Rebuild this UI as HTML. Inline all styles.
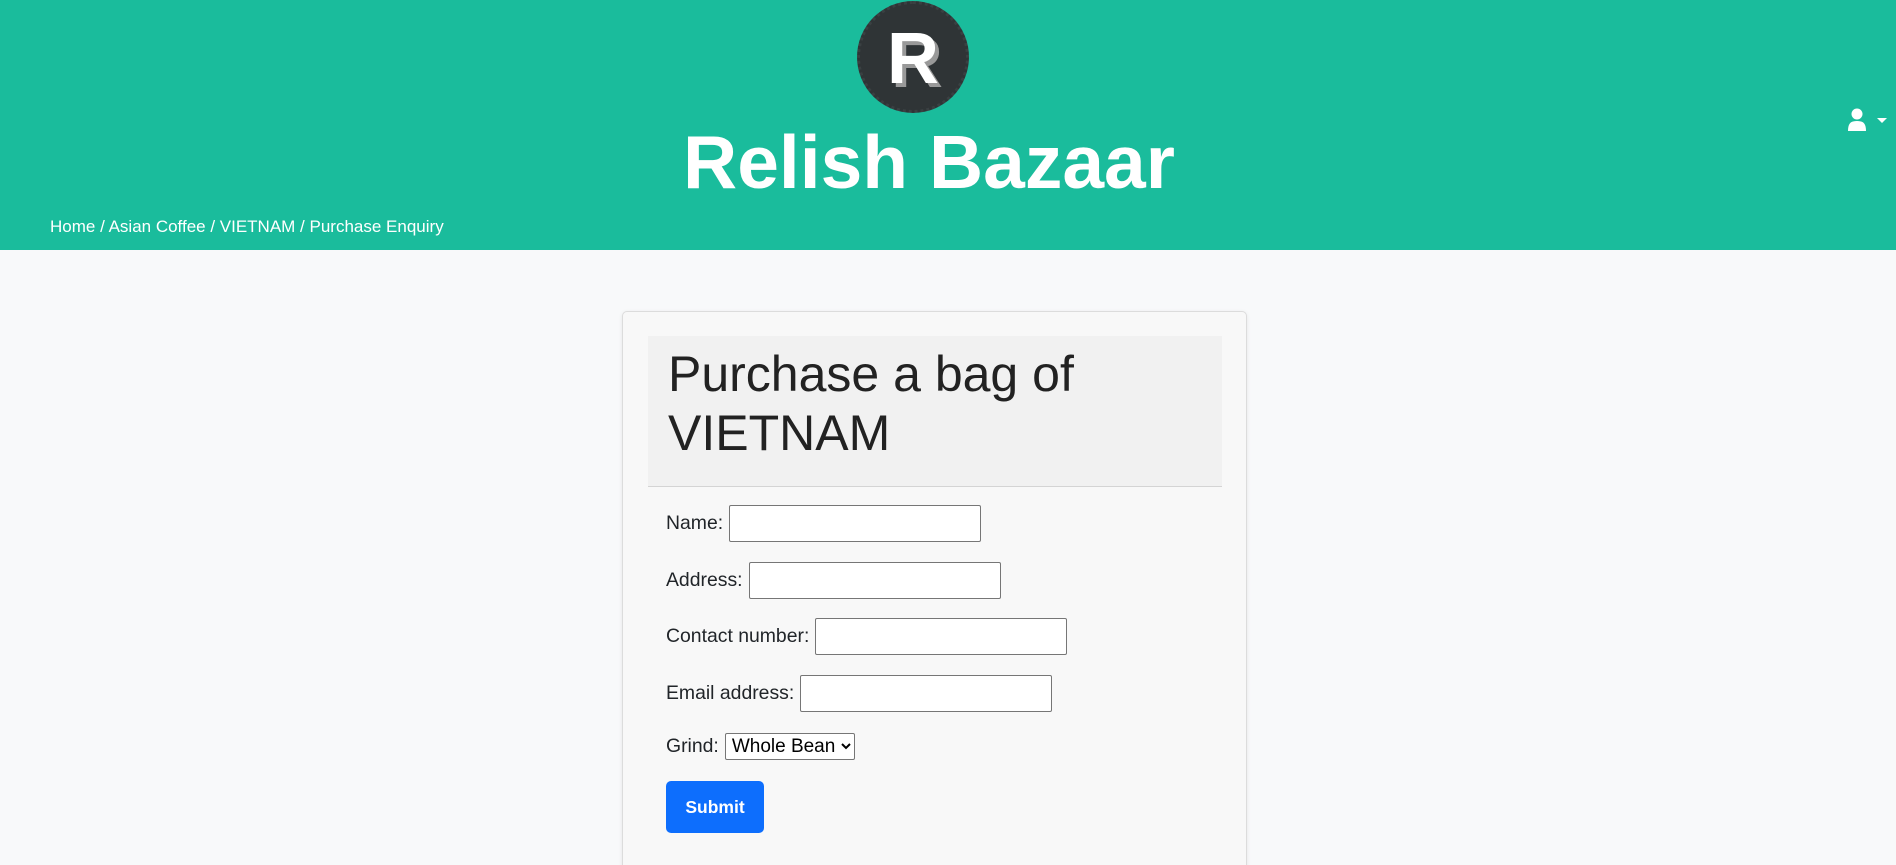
<!DOCTYPE html>
<html><head><meta charset="utf-8"><style>
*{box-sizing:border-box;margin:0;padding:0}
html,body{width:1896px;height:865px;overflow:hidden}
body{background:#f8f9fa;font-family:"Liberation Sans",Arial,sans-serif;color:#212529}
.wrap{position:relative;width:1896px;height:865px;overflow:hidden}
.hdr{position:absolute;left:0;top:0;width:1896px;height:250px;background:#1abc9c}
.logo{position:absolute;left:857px;top:1px;width:112px;height:112px;border-radius:50%;background:#2f3436;border:3px dotted #3a4042}
.logo span{position:absolute;left:0;right:0;top:14px;text-align:center;font-size:72px;font-weight:bold;color:#fff;text-shadow:4px 4px 0 #999}
.title{position:absolute;left:0;width:1858px;top:117px;text-align:center;font-size:75px;font-weight:bold;color:#fff;line-height:90px}
.bc{position:absolute;left:50px;top:217px;font-size:17px;color:#fff}
.user{position:absolute;left:1848px;top:108px}
.card{position:absolute;left:622px;top:311px;width:625px;height:600px;background:#f8f8f8;border:1px solid #dcdcdc;border-radius:5px;box-shadow:0 1px 4px rgba(0,0,0,.08)}
.hbox{position:absolute;left:25px;top:24px;width:574px;height:151px;background:#f1f1f1;border-bottom:1px solid #d4d4d4}
.hbox h1{font-weight:normal;font-size:50px;line-height:59px;padding:9px 0 0 20px;color:#222}
.row{position:absolute;left:43px;font-size:19.4px;display:flex;align-items:center}
.row input{height:37px;width:252px;border:1px solid #767676;border-radius:2px;margin-left:6px;background:#fff}
.row select{height:27px;font-size:19px;font-family:inherit;margin-left:6px;border:1px solid #767676;border-radius:2px;background:#fff;padding:0 2px}
.btn{position:absolute;left:43px;top:469px;width:98px;height:52px;background:#0d6efd;color:#fff;border-radius:5px;font-weight:bold;font-size:17.5px;text-align:center;line-height:52px}
</style></head><body><div class="wrap">
<div class="hdr">
<div class="logo"><span>R</span></div>
<div class="title">Relish Bazaar</div>
<div class="bc">Home / Asian Coffee / VIETNAM / Purchase Enquiry</div>
<svg class="user" width="42" height="24" viewBox="0 0 42 24"><circle cx="9" cy="6" r="5.5" fill="#fff"/><path d="M0 23 C0 15 3 13 9 13 C15 13 18 15 18 23 Z" fill="#fff"/><path d="M29 10 L39 10 L34 15 Z" fill="#fff"/></svg>
</div>
<div class="card">
<div class="hbox"><h1>Purchase a bag of VIETNAM</h1></div>
<div class="row" style="top:193px">Name:<input></div>
<div class="row" style="top:250px">Address:<input></div>
<div class="row" style="top:306px">Contact number:<input></div>
<div class="row" style="top:363px">Email address:<input></div>
<div class="row" style="top:421px">Grind:<select><option>Whole Bean</option></select></div>
<div class="btn">Submit</div>
</div>
</div></body></html>
